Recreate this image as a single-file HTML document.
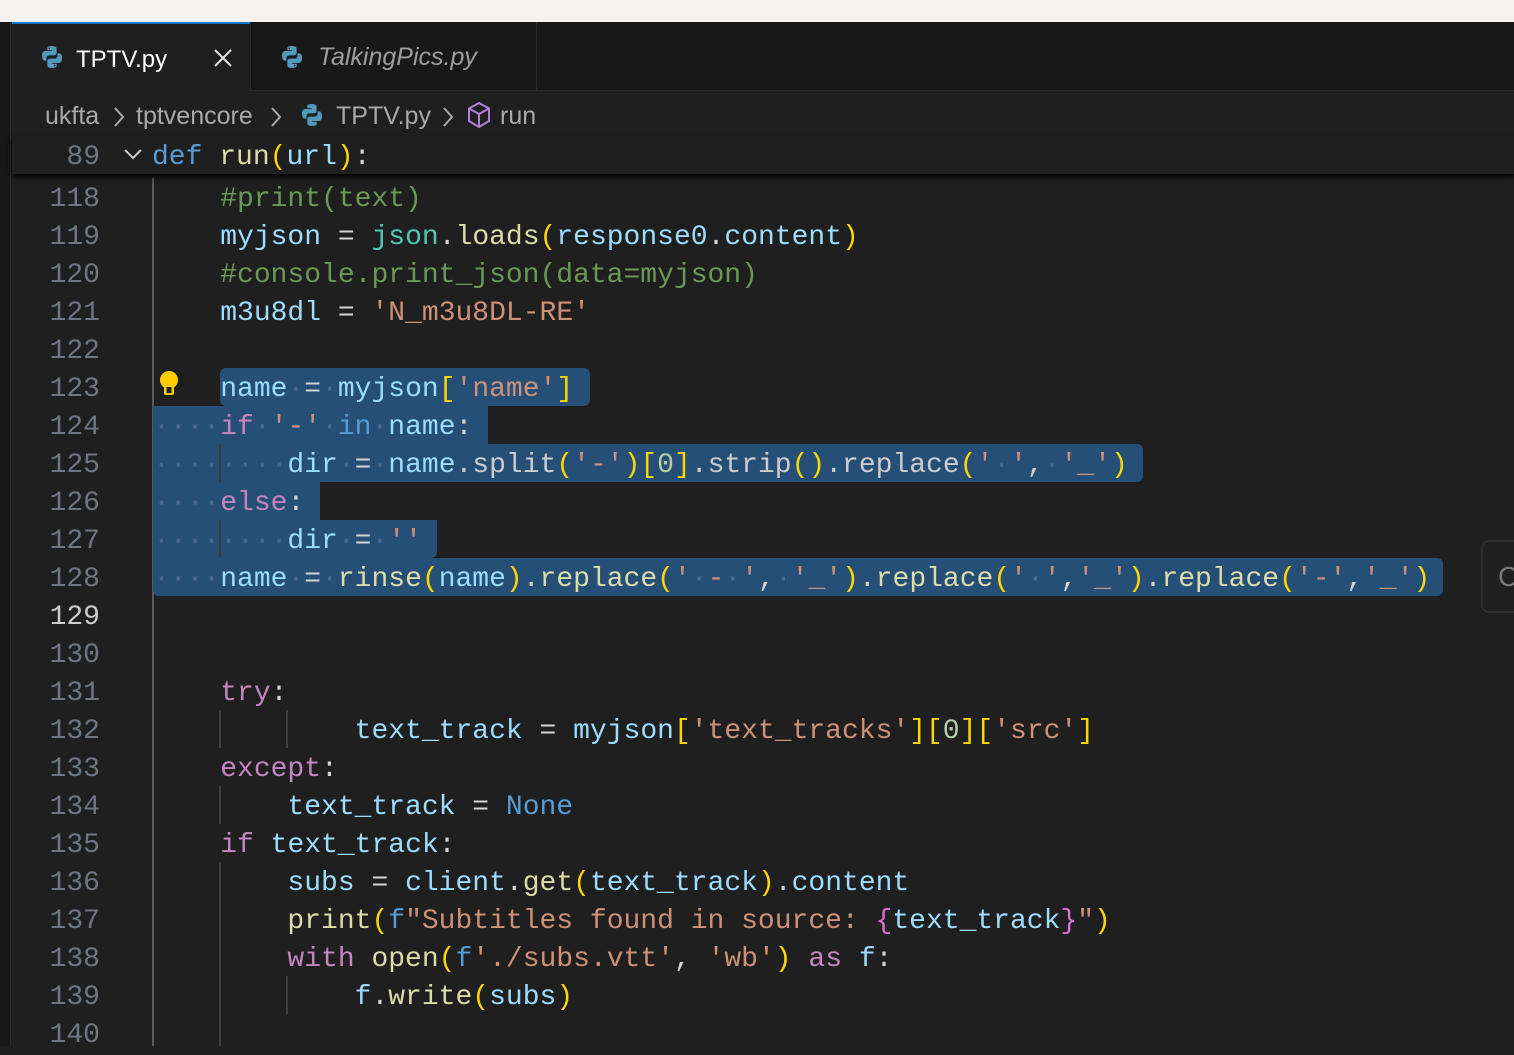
<!DOCTYPE html>
<html><head><meta charset="utf-8"><style>
*{margin:0;padding:0;box-sizing:border-box}
body{width:1514px;height:1046px;overflow:hidden;background:#1f1f1f;position:relative;font-family:"Liberation Mono",monospace}
.top{position:absolute;left:0;top:0;width:1514px;height:22px;background:#f4f3f1}
.strip{position:absolute;left:0;top:22px;width:11px;height:1024px;background:#181818;border-right:1px solid #2b2b2b}
.tabbar{position:absolute;left:12px;top:22px;right:0;height:69px;background:#181818;border-bottom:1px solid #2b2b2b}
.tab{position:absolute;top:0;height:69px;font-family:"Liberation Sans",sans-serif;font-size:24px;line-height:71px}
.t1{left:0;width:238px;background:#1f1f1f;border-top:2px solid #0078d4;color:#fff;height:70px}
.t2{left:238px;width:287px;border-left:1px solid #2b2b2b;border-right:1px solid #2b2b2b;color:#9d9d9d;font-style:italic;font-size:25px}
.py{position:absolute;width:24px;height:24px}
.cr{position:absolute;top:99px;font-family:"Liberation Sans",sans-serif;font-size:25px;color:#a9a9a9;line-height:34px;white-space:pre}
.chev{position:absolute;top:105px}
.l{position:absolute;left:0;height:38px;line-height:38px;font-size:28px;white-space:pre;transform:translateY(3px)}
.n{position:absolute;width:100px;text-align:right;color:#6e7681;font-size:28px;line-height:38px;height:38px;transform:translateY(3px)}
.code{position:absolute;left:153px}
.sel{position:absolute;background:#264f78;border-radius:6px}
.g{position:absolute;width:2px;background:#404040}
.k{color:#c586c0}.b{color:#569cd6}.v{color:#9cdcfe}.f{color:#dcdcaa}.s{color:#ce9178}.c{color:#6a9955}.y{color:#ffd700}.p{color:#da70d6}.t{color:#4ec9b0}.num{color:#b5cea8}.w{color:#d4d4d4}.d{color:#4b6a8a}.gr{color:#cccccc}
</style></head><body>
<div class="top"></div>
<div class="strip"></div>
<div class="tabbar">
 <div class="tab t1"><svg class="py" style="left:28px;top:21px" viewBox="0 0 24 24"><path d="M11.8 1C7 1 7.3 3 7.3 3v2.3h4.6V6H5.2S2 5.6 2 10.7s2.8 4.9 2.8 4.9h1.7v-2.4s-.1-2.8 2.8-2.8h4.6s2.7 0 2.7-2.6V3.6S17 1 11.8 1zM9.3 2.6a.8.8 0 110 1.6.8.8 0 010-1.6z" fill="#519aba"/><path d="M12.2 23c4.8 0 4.5-2 4.5-2v-2.3h-4.6V18h6.7s3.2.4 3.2-4.7-2.8-4.9-2.8-4.9h-1.7v2.4s.1 2.8-2.8 2.8H10s-2.7 0-2.7 2.6v4.2S7 23 12.2 23zm2.5-1.6a.8.8 0 110-1.6.8.8 0 010 1.6z" fill="#519aba"/></svg><span style="position:absolute;left:64px">TPTV.py</span><svg style="position:absolute;left:201px;top:24px" width="20" height="20" viewBox="0 0 20 20"><path d="M2 2l16 16M18 2L2 18" stroke="#e0e0e0" stroke-width="2"/></svg></div>
 <div class="tab t2"><svg class="py" style="left:29px;top:23px" viewBox="0 0 24 24"><path d="M11.8 1C7 1 7.3 3 7.3 3v2.3h4.6V6H5.2S2 5.6 2 10.7s2.8 4.9 2.8 4.9h1.7v-2.4s-.1-2.8 2.8-2.8h4.6s2.7 0 2.7-2.6V3.6S17 1 11.8 1zM9.3 2.6a.8.8 0 110 1.6.8.8 0 010-1.6z" fill="#519aba"/><path d="M12.2 23c4.8 0 4.5-2 4.5-2v-2.3h-4.6V18h6.7s3.2.4 3.2-4.7-2.8-4.9-2.8-4.9h-1.7v2.4s.1 2.8-2.8 2.8H10s-2.7 0-2.7 2.6v4.2S7 23 12.2 23zm2.5-1.6a.8.8 0 110-1.6.8.8 0 010 1.6z" fill="#519aba"/></svg><span style="position:absolute;left:67px">TalkingPics.py</span></div>
</div>
<div class="cr" style="left:45px">ukfta</div>
<svg class="chev" style="left:112px" width="14" height="24" viewBox="0 0 14 24"><path d="M3 3l8 9-8 9" stroke="#a9a9a9" stroke-width="2" fill="none"/></svg>
<div class="cr" style="left:136px">tptvencore</div>
<svg class="chev" style="left:269px" width="14" height="24" viewBox="0 0 14 24"><path d="M3 3l8 9-8 9" stroke="#a9a9a9" stroke-width="2" fill="none"/></svg>
<svg class="py" style="left:300px;top:103px" viewBox="0 0 24 24"><path d="M11.8 1C7 1 7.3 3 7.3 3v2.3h4.6V6H5.2S2 5.6 2 10.7s2.8 4.9 2.8 4.9h1.7v-2.4s-.1-2.8 2.8-2.8h4.6s2.7 0 2.7-2.6V3.6S17 1 11.8 1z" fill="#519aba"/><path d="M12.2 23c4.8 0 4.5-2 4.5-2v-2.3h-4.6V18h6.7s3.2.4 3.2-4.7-2.8-4.9-2.8-4.9h-1.7v2.4s.1 2.8-2.8 2.8H10s-2.7 0-2.7 2.6v4.2S7 23 12.2 23z" fill="#519aba"/></svg>
<div class="cr" style="left:336px">TPTV.py</div>
<svg class="chev" style="left:441px" width="14" height="24" viewBox="0 0 14 24"><path d="M3 3l8 9-8 9" stroke="#a9a9a9" stroke-width="2" fill="none"/></svg>
<svg style="position:absolute;left:466px;top:101px" width="26" height="28" viewBox="0 0 26 28" fill="none" stroke="#b180d7" stroke-width="2"><path d="M13 2L23 7.5V20L13 26 3 20V7.5z M3 7.5L13 13 23 7.5 M13 13V26"/></svg>
<div class="cr" style="left:500px">run</div>
<!-- sticky -->
<div style="position:absolute;left:12px;top:136px;right:0;height:38px;background:#1f1f1f;box-shadow:0 3px 5px #000;z-index:2">
 <div class="n" style="left:0;width:88px;top:0">89</div>
 <svg style="position:absolute;left:111px;top:11px" width="20" height="14" viewBox="0 0 20 14"><path d="M2 3l8 8 8-8" stroke="#ccc" stroke-width="2" fill="none"/></svg>
 <div class="l" style="left:140px;top:0"><span class="b">def</span> <span class="f">run</span><span class="y">(</span><span class="v">url</span><span class="y">)</span><span class="w">:</span></div>
</div>
<!-- guides -->
<div class="g" style="left:152px;top:178px;height:868px;background:#5a5a5a"></div>
<div class="g" style="left:219px;top:710px;height:38px"></div>
<div class="g" style="left:286px;top:710px;height:38px"></div>
<div class="g" style="left:219px;top:786px;height:38px"></div>
<div class="g" style="left:219px;top:862px;height:184px"></div>
<div class="g" style="left:286px;top:976px;height:38px"></div>
<!-- selection -->
<div class="sel" style="left:220px;top:368px;width:370px;height:38px"></div>
<div class="sel" style="left:153px;top:406px;width:335px;height:38px;border-radius:0 0 0 0"></div>
<div class="sel" style="left:153px;top:444px;width:990px;height:38px;border-radius:0 6px 6px 0"></div>
<div class="sel" style="left:153px;top:482px;width:167px;height:38px;border-radius:0"></div>
<div class="sel" style="left:153px;top:520px;width:284px;height:38px;border-radius:0 0 6px 0"></div>
<div class="sel" style="left:153px;top:558px;width:1290px;height:38px;border-radius:0 6px 6px 6px"></div>
<div style="position:absolute;left:488px;top:406px;width:20px;height:38px;background:#1f1f1f;border-radius:8px 0 0 0"></div>
<div style="position:absolute;left:320px;top:482px;width:20px;height:38px;background:#1f1f1f;border-radius:8px 0 0 8px"></div>
<div class="g" style="left:219px;top:444px;height:38px;background:#3a3a3a"></div>
<div class="g" style="left:219px;top:520px;height:38px;background:#3a3a3a"></div>
<!-- bulb -->
<svg style="position:absolute;left:158px;top:370px" width="22" height="28" viewBox="0 0 22 28"><circle cx="11" cy="10" r="9" fill="#ffcc00"/><rect x="6" y="14" width="10" height="11" rx="2" fill="#ffcc00"/><rect x="8.5" y="17" width="5" height="6" fill="#1f1f1f"/></svg>
<!-- C widget -->
<div style="position:absolute;left:1481px;top:540px;width:50px;height:73px;border:2px solid #2e2e2e;border-radius:8px;background:#1f1f1f;color:#777;font-family:'Liberation Sans',sans-serif;font-size:28px;line-height:70px;padding-left:15px">C</div>
<!-- line numbers -->
<div class="n" style="top:178px">118</div><div class="n" style="top:216px">119</div><div class="n" style="top:254px">120</div><div class="n" style="top:292px">121</div><div class="n" style="top:330px">122</div><div class="n" style="top:368px">123</div><div class="n" style="top:406px">124</div><div class="n" style="top:444px">125</div><div class="n" style="top:482px">126</div><div class="n" style="top:520px">127</div><div class="n" style="top:558px">128</div><div class="n" style="top:596px;color:#cccccc">129</div><div class="n" style="top:634px">130</div><div class="n" style="top:672px">131</div><div class="n" style="top:710px">132</div><div class="n" style="top:748px">133</div><div class="n" style="top:786px">134</div><div class="n" style="top:824px">135</div><div class="n" style="top:862px">136</div><div class="n" style="top:900px">137</div><div class="n" style="top:938px">138</div><div class="n" style="top:976px">139</div><div class="n" style="top:1014px">140</div>
<div class="code">
<div class="l" style="top:178px">    <span class="c">#print(text)</span></div>
<div class="l" style="top:216px">    <span class="v">myjson</span> <span class="w">=</span> <span class="t">json</span><span class="w">.</span><span class="f">loads</span><span class="y">(</span><span class="v">response0</span><span class="w">.</span><span class="v">content</span><span class="y">)</span></div>
<div class="l" style="top:254px">    <span class="c">#console.print_json(data=myjson)</span></div>
<div class="l" style="top:292px">    <span class="v">m3u8dl</span> <span class="w">=</span> <span class="s">'N_m3u8DL-RE'</span></div>
<div class="l" style="top:368px">    <span class="v">name</span><span class="d">·</span><span class="w">=</span><span class="d">·</span><span class="v">myjson</span><span class="y">[</span><span class="s">'name'</span><span class="y">]</span></div>
<div class="l" style="top:406px"><span class="d">····</span><span class="k">if</span><span class="d">·</span><span class="s">'-'</span><span class="d">·</span><span class="b">in</span><span class="d">·</span><span class="v">name</span><span class="w">:</span></div>
<div class="l" style="top:444px"><span class="d">········</span><span class="v">dir</span><span class="d">·</span><span class="w">=</span><span class="d">·</span><span class="v">name</span><span class="gr">.split</span><span class="y">(</span><span class="s">'-'</span><span class="y">)[</span><span class="num">0</span><span class="y">]</span><span class="gr">.strip</span><span class="y">()</span><span class="gr">.replace</span><span class="y">(</span><span class="s">'</span><span class="d">·</span><span class="s">'</span><span class="gr">,</span><span class="d">·</span><span class="s">'_'</span><span class="y">)</span></div>
<div class="l" style="top:482px"><span class="d">····</span><span class="k">else</span><span class="w">:</span></div>
<div class="l" style="top:520px"><span class="d">········</span><span class="v">dir</span><span class="d">·</span><span class="w">=</span><span class="d">·</span><span class="s">''</span></div>
<div class="l" style="top:558px"><span class="d">····</span><span class="v">name</span><span class="d">·</span><span class="w">=</span><span class="d">·</span><span class="f">rinse</span><span class="y">(</span><span class="v">name</span><span class="y">)</span><span class="w">.</span><span class="f">replace</span><span class="y">(</span><span class="s">'</span><span class="d">·</span><span class="s">-</span><span class="d">·</span><span class="s">'</span><span class="w">,</span><span class="d">·</span><span class="s">'_'</span><span class="y">)</span><span class="w">.</span><span class="f">replace</span><span class="y">(</span><span class="s">'</span><span class="d">·</span><span class="s">'</span><span class="w">,</span><span class="s">'_'</span><span class="y">)</span><span class="w">.</span><span class="f">replace</span><span class="y">(</span><span class="s">'-'</span><span class="w">,</span><span class="s">'_'</span><span class="y">)</span></div>
<div class="l" style="top:672px">    <span class="k">try</span><span class="w">:</span></div>
<div class="l" style="top:710px">            <span class="v">text_track</span> <span class="w">=</span> <span class="v">myjson</span><span class="y">[</span><span class="s">'text_tracks'</span><span class="y">][</span><span class="num">0</span><span class="y">][</span><span class="s">'src'</span><span class="y">]</span></div>
<div class="l" style="top:748px">    <span class="k">except</span><span class="w">:</span></div>
<div class="l" style="top:786px">        <span class="v">text_track</span> <span class="w">=</span> <span class="b">None</span></div>
<div class="l" style="top:824px">    <span class="k">if</span> <span class="v">text_track</span><span class="w">:</span></div>
<div class="l" style="top:862px">        <span class="v">subs</span> <span class="w">=</span> <span class="v">client</span><span class="w">.</span><span class="f">get</span><span class="y">(</span><span class="v">text_track</span><span class="y">)</span><span class="w">.</span><span class="v">content</span></div>
<div class="l" style="top:900px">        <span class="f">print</span><span class="y">(</span><span class="b">f</span><span class="s">"Subtitles found in source: </span><span class="p">{</span><span class="v">text_track</span><span class="p">}</span><span class="s">"</span><span class="y">)</span></div>
<div class="l" style="top:938px">        <span class="k">with</span> <span class="f">open</span><span class="y">(</span><span class="b">f</span><span class="s">'./subs.vtt'</span><span class="w">,</span> <span class="s">'wb'</span><span class="y">)</span> <span class="k">as</span> <span class="v">f</span><span class="w">:</span></div>
<div class="l" style="top:976px">            <span class="v">f</span><span class="w">.</span><span class="f">write</span><span class="y">(</span><span class="v">subs</span><span class="y">)</span></div>
</div>
</body></html>
